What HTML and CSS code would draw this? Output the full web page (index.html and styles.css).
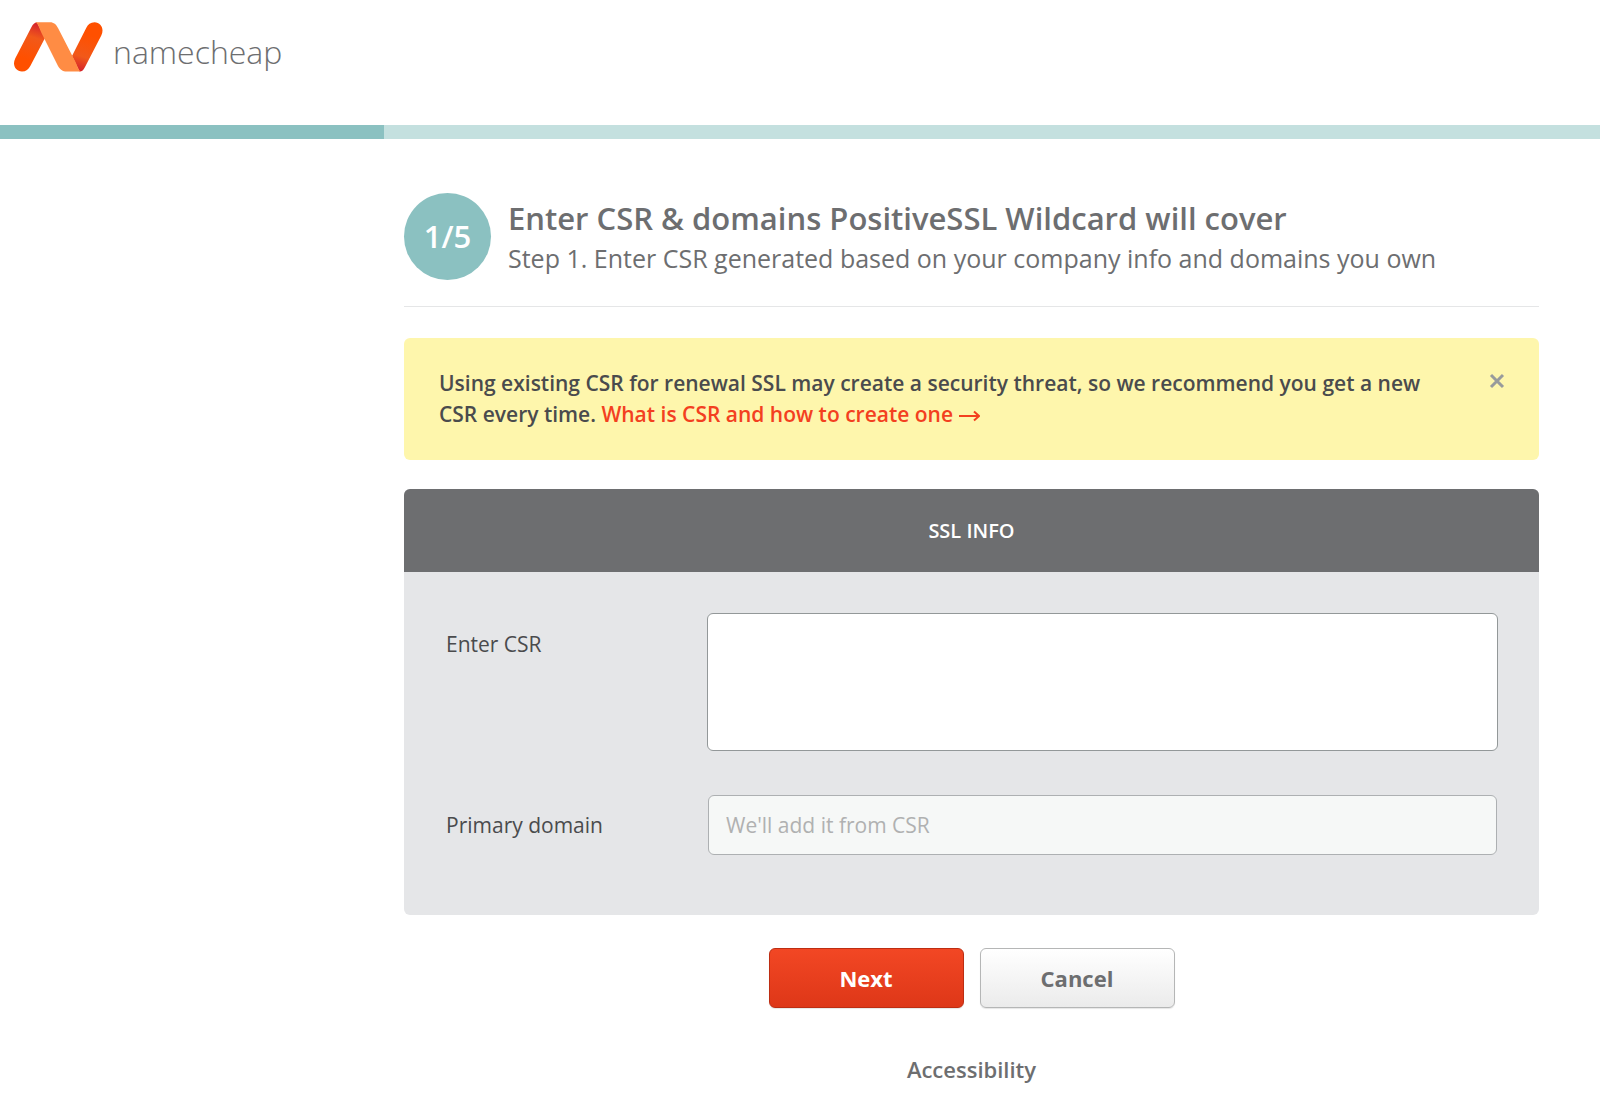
FILE: index.html
```html
<!DOCTYPE html>
<html lang="en">
<head>
  <meta charset="utf-8">
  <meta name="viewport" content="width=device-width, initial-scale=1">
  <title>Enter CSR - Namecheap</title>
  <link rel="stylesheet" href="styles.css">
</head>
<body>
  <header class="site-header">
    <a class="logo" href="#">
      <svg class="logo-mark" viewBox="14 22 89 50" aria-hidden="true">
        <defs>
          <linearGradient id="fold-left" gradientUnits="userSpaceOnUse" x1="35" y1="22" x2="24" y2="58">
            <stop offset="0" stop-color="#d3202e"/>
            <stop offset=".4" stop-color="#f1591a"/>
            <stop offset="1" stop-color="#ff5000"/>
          </linearGradient>
          <linearGradient id="fold-right" gradientUnits="userSpaceOnUse" x1="81" y1="72" x2="92" y2="36">
            <stop offset="0" stop-color="#d3202e"/>
            <stop offset=".4" stop-color="#f1591a"/>
            <stop offset="1" stop-color="#ff5000"/>
          </linearGradient>
        </defs>
        <path fill="url(#fold-left)" d="M37 22.5C34.500 22.500 33 24 31.500 27L15.200 58.500C12 65 15.500 71.500 22 71.500C26 71.500 28.500 69.500 30.300 66L45 38Z"/>
        <path fill="url(#fold-right)" d="M79.500 71.500C82 71.500 83.500 70 85 67L101.300 35.500C104.500 29 101 22.300 94.500 22.300C90.500 22.300 88 24.500 86.200 28L72 56Z"/>
        <path fill="#ff8c44" d="M35 22.300H50C54 22.300 56 24.500 58 28L75 61C77.500 66 78.500 70.500 81 71.500H67C62.500 71.500 60 69.500 58 66L41.500 33C39 28 38.500 23.500 35 22.300Z"/>
      </svg>
      <span class="logo-name">namecheap</span>
    </a>
  </header>

  <div class="progress"><div class="progress-done"></div></div>

  <main class="wizard">
    <div class="step">
      <div class="step-badge">1/5</div>
      <div>
        <h1 class="step-title">Enter CSR &amp; domains PositiveSSL Wildcard will cover</h1>
        <p class="step-text">Step 1. Enter CSR generated based on your company info and domains you own</p>
      </div>
    </div>

    <div class="notice">
      <p class="notice-text">Using existing CSR for renewal SSL may create a security threat, so we recommend you get a new CSR every time. <a class="notice-link" href="#">What is CSR and how to create one <svg class="arrow" viewBox="0 0 21 12" aria-hidden="true"><path d="M0 6H20M15 1.500L20 6L15 10.500"/></svg></a></p>
      <button class="notice-close" type="button" aria-label="Close">
        <svg viewBox="0 0 16 16" aria-hidden="true"><path d="M2 2L14 14M14 2L2 14"/></svg>
      </button>
    </div>

    <form class="form">
      <section class="panel">
        <h2 class="panel-title">SSL INFO</h2>
        <div class="panel-body">
          <label class="label label-top" for="csr">Enter CSR</label>
          <textarea class="field field-area" id="csr"></textarea>
          <label class="label" for="domain">Primary domain</label>
          <div class="field-inset">
            <input class="field field-line" id="domain" type="text" placeholder="We'll add it from CSR" disabled>
          </div>
        </div>
      </section>
      <div class="actions">
        <button class="button button-primary" type="submit">Next</button>
        <button class="button" type="button">Cancel</button>
      </div>
    </form>
  </main>

  <footer class="footer"><a class="footer-link" href="#">Accessibility</a></footer>
</body>
</html>
```
FILE: styles.css
```css
* {
  box-sizing: border-box;
}

body {
  margin: 0;
  background: #fff;
  color: #4a4b4d;
  font-family: "Open Sans", "Noto Sans", sans-serif;
  font-size: 21px;
  line-height: 31px;
}

h1, h2, p {
  margin: 0;
}

.site-header {
  display: flex;
  padding: 22px 14px 53px;
}

.logo {
  display: flex;
  align-items: center;
  gap: 10px;
  height: 50px;
  color: #6d6e70;
  text-decoration: none;
}

.logo-mark {
  width: 89px;
  height: 50px;
}

.logo-name {
  padding-top: 10px;
  font-size: 32px;
  font-weight: 300;
  line-height: 40px;
}

.progress {
  height: 14px;
  background: #c4e0df;
}

.progress-done {
  width: 24%;
  height: 100%;
  background: #8bc1c1;
}

.wizard {
  padding: 54px 61px 0 404px;
}

.step {
  display: flex;
  align-items: center;
  gap: 17px;
  padding-bottom: 26px;
  border-bottom: 1px solid #e5e6e7;
  color: #6d6e70;
}

.step-badge {
  display: grid;
  flex: none;
  place-items: center;
  width: 87px;
  height: 87px;
  border-radius: 50%;
  background: #8bc1c1;
  color: #fff;
  font-size: 31px;
  font-weight: 600;
}

.step-title {
  font-size: 31px;
  font-weight: 600;
  line-height: 42px;
}

.step-text {
  font-size: 25px;
  line-height: 38px;
}

.notice {
  display: flex;
  align-items: flex-start;
  justify-content: space-between;
  gap: 24px;
  margin-top: 31px;
  padding: 30px 34px 30px 35px;
  border-radius: 6px;
  background: #fef6ac;
}

.notice-text {
  max-width: 1000px;
  font-weight: 600;
}

.notice-link {
  color: #f3401f;
  text-decoration: none;
}

.arrow {
  width: 21px;
  height: 12px;
  fill: none;
  stroke: currentColor;
  stroke-width: 2;
}

.notice-close {
  display: flex;
  margin-top: 5px;
  padding: 0;
  border: 0;
  background: none;
}

.notice-close svg {
  width: 16px;
  height: 16px;
  stroke: #989b9c;
  stroke-width: 3;
}

.panel {
  margin-top: 29px;
  overflow: hidden;
  border-radius: 6px;
  background: #e5e6e8;
}

.panel-title {
  padding: 26px 20px;
  background: #6d6e70;
  color: #fff;
  font-size: 20px;
  font-weight: 600;
  text-align: center;
}

.panel-body {
  display: grid;
  grid-template-columns: 261px 1fr;
  row-gap: 44px;
  align-items: center;
  padding: 41px 41px 60px 42px;
}

.label-top {
  align-self: start;
  padding-top: 16px;
}

.field {
  display: block;
  width: 100%;
  margin: 0;
  padding: 14px 17px;
  border: 1px solid #939899;
  border-radius: 6px;
  background: #fff;
  color: #4a4b4d;
  font: inherit;
}

.field-area {
  height: 138px;
  resize: none;
}

.field-inset {
  padding: 0 1px;
}

.field-line {
  height: 60px;
  border-color: #adb0b2;
  background: #f6f8f7;
}

.field::placeholder {
  color: #b0b1b1;
  opacity: 1;
}

.actions {
  display: flex;
  justify-content: center;
  gap: 16px;
  margin-top: 33px;
}

.button {
  width: 195px;
  height: 60px;
  padding: 0;
  border: 1px solid #b5b6b6;
  border-radius: 6px;
  background: linear-gradient(#fff, #ebebeb);
  box-shadow: 0 1px 1px rgba(0, 0, 0, 0.1);
  color: #6d6e70;
  font-family: inherit;
  font-size: 22px;
  font-weight: 700;
}

.button-primary {
  border-color: #bd2d12;
  background: linear-gradient(#f24724, #de3718);
  color: #fff;
}

.footer {
  padding: 46px 61px 19px 404px;
  text-align: center;
}

.footer-link {
  color: #6d6e70;
  font-size: 22px;
  font-weight: 600;
  text-decoration: none;
}
```
